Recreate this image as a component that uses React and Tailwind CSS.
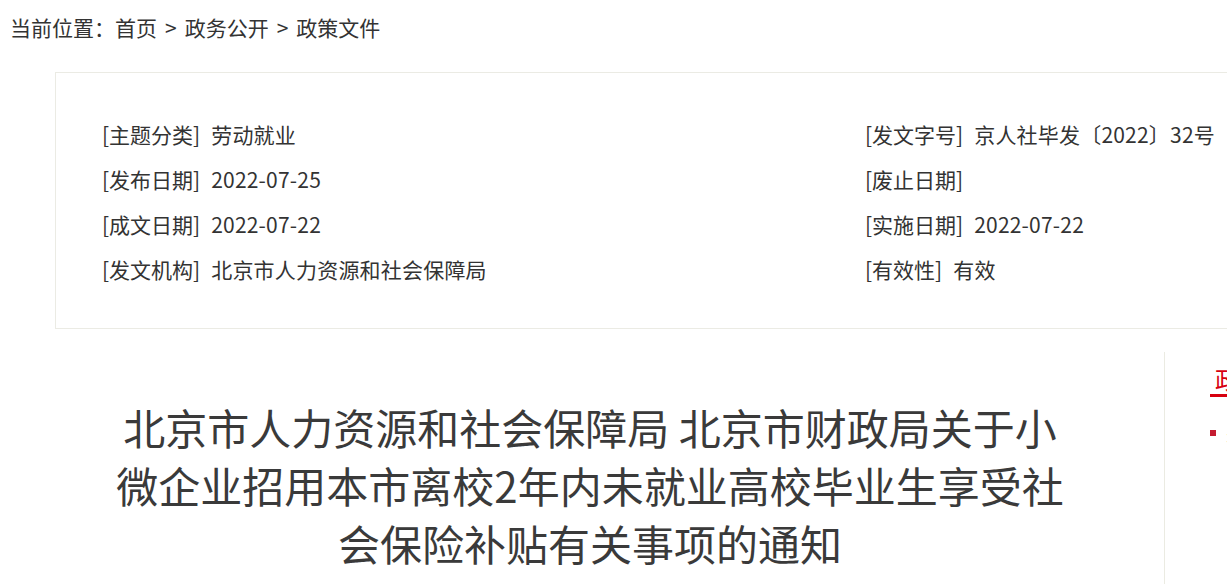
export default function App() {
  const left = [
    ["[主题分类]", "劳动就业"],
    ["[发布日期]", "2022-07-25"],
    ["[成文日期]", "2022-07-22"],
    ["[发文机构]", "北京市人力资源和社会保障局"],
  ];
  const right = [
    ["[发文字号]", "京人社毕发〔2022〕32号"],
    ["[废止日期]", ""],
    ["[实施日期]", "2022-07-22"],
    ["[有效性]", "有效"],
  ];
  const Row = ({ l, v }) => (
    <div className="h-[45px] leading-[45px] whitespace-nowrap">
      <span>{l}</span>
      {v && <span className="ml-[11px] tracking-[0.2px]">{v}</span>}
    </div>
  );
  return (
    <div className="w-[1227px] h-[584px] overflow-hidden bg-white text-[#333] font-['Microsoft_YaHei','Noto_Sans_CJK_SC',sans-serif]">
      <div className="w-[1500px]">
        <div className="pl-[10px] pt-[12px] text-[21px] leading-[30px] whitespace-nowrap">
          当前位置：首页<span className="mx-[8px]">&gt;</span>政务公开<span className="mx-[8px]">&gt;</span>政策文件
        </div>
        <div className="ml-[55px] mt-[30px] w-[1400px] border border-[#ebebe4] pt-[39px] pb-[36px] pl-[46px] text-[21px]">
          <div className="flex">
            <div className="w-[763px]">
              {left.map(([l, v]) => <Row key={l} l={l} v={v} />)}
            </div>
            <div>
              {right.map(([l, v]) => <Row key={l} l={l} v={v} />)}
            </div>
          </div>
        </div>
        <div className="flex mt-[23px]">
          <div className="w-[1165px] h-[300px] border-r border-[#ebebe2]">
            <h1 className="ml-[110px] w-[960px] pt-[46px] text-center text-[42px] leading-[58px] text-[#3a3a3a]">
              北京市人力资源和社会保障局 北京市财政局关于小微企业招用本市离校2年内未就业高校毕业生享受社会保险补贴有关事项的通知
            </h1>
          </div>
          <div className="pl-[45px] w-[320px]">
            <div className="pt-[12px]">
              <div className="pl-[5px] text-[24px] leading-[30px] text-[#d7000f] border-b-[3px] border-[#d7000f] whitespace-nowrap">
                政策解读
              </div>
            </div>
            <div className="mt-[16px] h-[40px] flex items-center gap-[10px] text-[18px] whitespace-nowrap">
              <span className="w-[6px] h-[6px] bg-[#c41c30]"></span>
              <span>关于政策的解读</span>
            </div>
          </div>
        </div>
      </div>
    </div>
  );
}
